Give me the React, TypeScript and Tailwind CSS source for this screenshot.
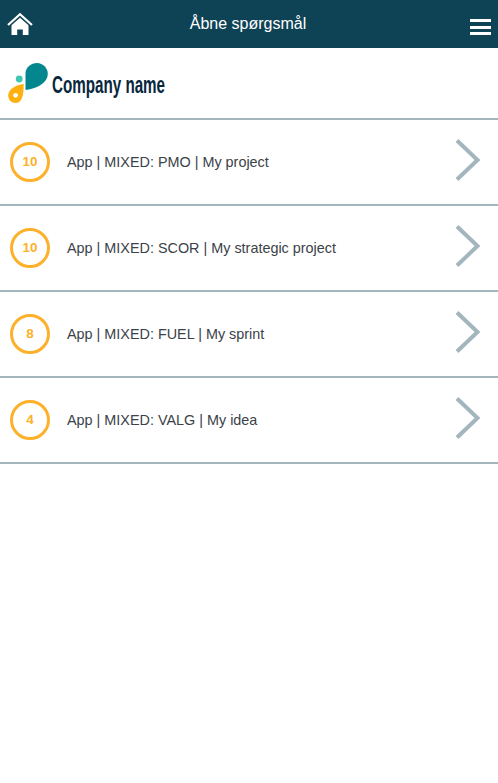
const rows = [
  { n: 10, t: "App | MIXED: PMO | My project" },
  { n: 10, t: "App | MIXED: SCOR | My strategic project" },
  { n: 8, t: "App | MIXED: FUEL | My sprint" },
  { n: 4, t: "App | MIXED: VALG | My idea" },
];

function Home() {
  return (
    <svg width="26" height="24" viewBox="0 0 26 24" className="block">
      <path d="M1 13 L13 2.2 L25 13" fill="none" stroke="#fff" strokeWidth="2.2" />
      <path d="M4.5 13.2 L13 5.8 L21.5 13.2 V23 H15.8 V17.4 H10.2 V23 H4.5 Z" fill="#fff" />
    </svg>
  );
}

function Logo() {
  return (
    <svg width="42" height="42" viewBox="0 0 42 42" className="block">
      <path d="M17.5 28 V11.5 C17.5 5.5 23 1 29 1 C35 1 39.8 6 39.8 12 C39.8 20 30 26.5 17.5 28 Z" fill="#04868f" />
      <circle cx="11.2" cy="17" r="3.4" fill="#3fc8b0" />
      <path d="M15.7 22 C15.7 30 15 41 7.6 41 C3.5 41 0.2 38 0.2 33.5 C0.2 27 8 23 15.7 22 Z" fill="#fdb00f" />
      <circle cx="7.6" cy="33.3" r="2.4" fill="#fff" />
    </svg>
  );
}

export default function App() {
  return (
    <div className="h-[783px] w-full bg-white font-['Liberation_Sans',Arial,sans-serif]">
      <header className="flex h-12 items-center bg-[#0e4255] pl-[7px] pr-[7px]">
        <div className="flex-1">
          <Home />
        </div>
        <h1 className="mr-[2px] text-base leading-none text-white">Åbne spørgsmål</h1>
        <div className="flex flex-1 justify-end">
          <div className="mt-[6px] flex w-[21px] flex-col gap-[3.5px]">
            <span className="h-[3px] bg-white" />
            <span className="h-[3px] bg-white" />
            <span className="h-[3px] bg-white" />
          </div>
        </div>
      </header>
      <div className="flex h-[70px] items-center gap-[2px] pl-2">
        <Logo />
        <span className="mt-[4px] inline-block origin-left scale-x-[0.66] text-[23px] leading-none font-bold text-[#08263c]">
          Company name
        </span>
      </div>
      <ul className="border-t-2 border-[#a3b5bd]">
        {rows.map((r) => (
          <li key={r.t} className="flex h-[86px] items-center border-b-2 border-[#a3b5bd] pl-2.5 pr-[17px]">
            <span className="flex h-10 w-10 shrink-0 items-center justify-center rounded-full border-[3px] border-[#fdb02a] text-[13.5px] font-bold text-[#fdb02a]">
              {r.n}
            </span>
            <span className="ml-[17px] flex-1 pt-[2px] text-[14.4px] text-[#3b4249]">{r.t}</span>
            <svg width="26" height="46" viewBox="0 0 26 46" className="mb-1 block">
              <path d="M2 3.5 L22.5 23 L2 42.5" fill="none" stroke="#a3b5bd" strokeWidth="4" />
            </svg>
          </li>
        ))}
      </ul>
    </div>
  );
}
